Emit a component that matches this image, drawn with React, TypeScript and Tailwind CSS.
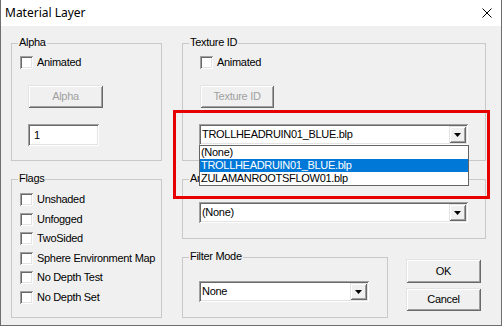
import type { ReactNode } from "react"

const raised =
  "shadow-[inset_1px_1px_0_#e3e3e3,inset_-1px_-1px_0_#696969,inset_2px_2px_0_#ffffff,inset_-2px_-2px_0_#a0a0a0]"
const sunken =
  "shadow-[inset_1px_1px_0_#a0a0a0,inset_-1px_-1px_0_#ffffff,inset_2px_2px_0_#696969,inset_-2px_-2px_0_#e3e3e3]"

const Group = ({ label, className, children }: { label: string; className: string; children?: ReactNode }) => (
  <div className={`relative border border-[#c8c8c8] ${className}`}>
    <span className="absolute left-[6px] top-[-8px] bg-[#f0f0f0] px-[1px] leading-[13px] whitespace-nowrap">
      {label}
    </span>
    {children}
  </div>
)

const CheckBox = ({ label }: { label: string }) => (
  <div className="flex items-center h-[13px]">
    <span className={`w-[13px] h-[13px] bg-white ${sunken}`}></span>
    <span className="ml-[4px] leading-[13px] whitespace-nowrap">{label}</span>
  </div>
)

const Button = ({ label, disabled, className }: { label: string; disabled?: boolean; className: string }) => (
  <div
    className={`flex items-center justify-center h-[23px] bg-[#f0f0f0] ${raised} ${
      disabled ? "text-[#a0a0a0]" : "text-black"
    } ${className}`}>
    {label}
  </div>
)

const Arrow = () => (
  <div className={`w-[17px] h-[17px] bg-[#f0f0f0] flex items-center justify-center ${raised}`}>
    <svg width="7" height="4" viewBox="0 0 7 4">
      <polygon points="0,0 7,0 3.5,4" fill="#000" />
    </svg>
  </div>
)

const Combo = ({ value, className, children }: { value: string; className: string; children?: ReactNode }) => (
  <div className={`relative flex h-[21px] p-[2px] bg-white ${sunken} ${className}`}>
    <div className="flex-1 pl-[1px] leading-[17px] whitespace-nowrap overflow-hidden">{value}</div>
    <Arrow />
    {children}
  </div>
)

const options = ["(None)", "TROLLHEADRUIN01_BLUE.blp", "ZULAMANROOTSFLOW01.blp"]

export default function App() {
  return (
    <div className="w-[503px] h-[329px] bg-white font-['Liberation_Sans',Arial,sans-serif] text-[11px] tracking-[-0.3px] text-black">
      <div className="relative w-[502px] h-[326px] flex flex-col border-l border-r border-b border-[#6e6e6e]">
        {/* title bar */}
        <div className="h-[26px] bg-white flex items-center justify-between pl-[4px] pr-[9px]">
          <span className="font-['Noto_Sans','Segoe_UI',sans-serif] text-[12px] tracking-normal">Material Layer</span>
          <svg width="10" height="10" viewBox="0 0 10 10">
            <path d="M0.5 0.5 L9.5 9.5 M9.5 0.5 L0.5 9.5" stroke="#000" strokeWidth="1" />
          </svg>
        </div>

        {/* body */}
        <div className="flex-1 bg-[#f0f0f0] flex pl-[10px] pt-[17px]">
          {/* left column */}
          <div className="w-[151px] flex flex-col">
            <Group label="Alpha" className="h-[118px] pl-[8px] pt-[12px]">
              <CheckBox label="Animated" />
              <Button label="Alpha" disabled className="mt-[16px] ml-[8px] w-[75px]" />
              <div className={`mt-[16px] ml-[8px] w-[71px] h-[22px] bg-white pl-[6px] leading-[22px] ${sunken}`}>1</div>
            </Group>

            <Group label="Flags" className="mt-[18px] h-[139px] pl-[8px] pt-[13px]">
              <CheckBox label="Unshaded" />
              <div className="mt-[7px]"><CheckBox label="Unfogged" /></div>
              <div className="mt-[6px]"><CheckBox label="TwoSided" /></div>
              <div className="mt-[7px]"><CheckBox label="Sphere Environment Map" /></div>
              <div className="mt-[6px]"><CheckBox label="No Depth Test" /></div>
              <div className="mt-[7px]"><CheckBox label="No Depth Set" /></div>
            </Group>
          </div>

          {/* right column */}
          <div className="ml-[20px] w-[304px] flex flex-col">
            <Group label="Texture ID" className="z-10 h-[118px] pl-[17px] pt-[12px]">
              <CheckBox label="Animated" />
              <Button label="Texture ID" disabled className="mt-[16px] w-[74px]" />
              <Combo value="TROLLHEADRUIN01_BLUE.blp" className="mt-[16px] ml-[-1px] w-[269px]">
                {/* open drop-down list */}
                <div className="absolute left-0 top-[21px] w-[270px] border border-[#646464] bg-white">
                  {options.map((o, i) => (
                    <div
                      key={o}
                      className={`h-[13px] leading-[13px] pl-[1px] whitespace-nowrap ${
                        i === 1 ? "bg-[#0078d7] text-white" : ""
                      }`}>
                      {o}
                    </div>
                  ))}
                </div>
              </Combo>
            </Group>

            <Group label="Animation ID" className="mt-[18px] h-[60px] pl-[16px] pt-[22px]">
              <Combo value="(None)" className="w-[269px]" />
            </Group>

            <div className="mt-[18px] flex">
              <Group label="Filter Mode" className="w-[206px] h-[61px] pl-[16px] pt-[23px]">
                <Combo value="None" className="w-[170px]" />
              </Group>
              <div className="ml-[18px] pt-[2px] flex flex-col">
                <Button label="OK" className="w-[75px] h-[24px]" />
                <Button label="Cancel" className="mt-[5px] w-[75px]" />
              </div>
            </div>
          </div>
        </div>

        {/* red highlight annotation */}
        <div className="absolute left-[172px] top-[110px] w-[317px] h-[89px] border-[3px] border-[#e60000] z-20 pointer-events-none"></div>
      </div>
    </div>
  )
}
